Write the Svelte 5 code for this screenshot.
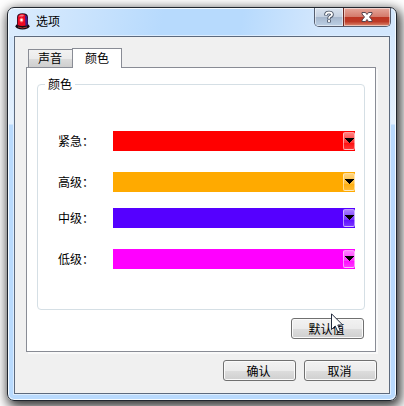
<script lang="ts">
	type Level = { id: string; label: string; color: string };

	const palette = ['#ff0000', '#ffaa00', '#5500ff', '#ff00ff'];
	const defaults = ['#ff0000', '#ffaa00', '#5500ff', '#ff00ff'];

	let tab = $state('color');
	let levels = $state<Level[]>([
		{ id: 'urgent', label: '紧急：', color: '#ff0000' },
		{ id: 'high', label: '高级：', color: '#ffaa00' },
		{ id: 'medium', label: '中级：', color: '#5500ff' },
		{ id: 'low', label: '低级：', color: '#ff00ff' },
	]);

	function reset() {
		levels.forEach((level, i) => (level.color = defaults[i]));
	}
</script>

<div class="window">
	<header>
		<svg class="app-icon" width="16" height="17" viewBox="0 0 16 17">
			<ellipse cx="7.5" cy="13.3" rx="7" ry="3.2" fill="#150a12" />
			<path d="M2 13V4.500Q2 .3 7.500 .3T13 4.500V13Z" fill="#281025" />
			<path d="M2.800 12V5Q3 1 7 1T12 5V12Q7 14 2.800 12Z" fill="#ee0822" />
			<path d="M10 2Q12.500 3 12.500 6V12L10.500 12.800Z" fill="#41188f" />
			<path d="M4 3Q6 1 9 2L8 3.500H4Z" fill="#f27a83" />
			<ellipse cx="6.500" cy="7" rx="2" ry="2.500" fill="#ff6262" />
			<circle cx="6.500" cy="7" r="1.200" fill="#fff" />
			<path d="M3 14Q7.500 16 12 14" fill="none" stroke="#a13a38" />
		</svg>
		<h1>选项</h1>
		<div class="caption">
			<button type="button" class="help" aria-label="帮助">
				<svg width="12" height="14" viewBox="0 0 12 14" fill="none">
					<path d="M3 5.500V4.500Q3 2.500 6 2.500T9 4.500Q9 6 7 6.500Q6 7 6 9M6 9.500V12.500" stroke="#4b5566" stroke-width="3.600" />
					<path d="M3 5V4.500Q3 2.500 6 2.500T9 4.500Q9 6 7 6.500Q6 7 6 8.800M6 10V12" stroke="#fff" stroke-width="1.800" />
				</svg>
			</button>
			<button type="button" class="close" aria-label="关闭">
				<svg width="14" height="12" viewBox="0 0 14 12">
					<path d="M2 1.500H5.500L7 3.500 8.500 1.500H12V3L9.500 6 12 9V10.500H8.500L7 8.500 5.500 10.500H2V9L4.500 6 2 3Z" fill="#fff" stroke="#57444e" />
				</svg>
			</button>
		</div>
	</header>

	<main>
		<div class="tabs" role="tablist">
			<button type="button" role="tab" aria-selected={tab === 'sound'} onclick={() => (tab = 'sound')}>声音</button>
			<button type="button" role="tab" aria-selected={tab === 'color'} onclick={() => (tab = 'color')}>颜色</button>
		</div>

		<div class="pane" role="tabpanel">
			{#if tab === 'color'}
				<fieldset>
					<legend>颜色</legend>
					{#each levels as level (level.id)}
						<div class="row">
							<label for={level.id}>{level.label}</label>
							<div class="combo">
								<select id={level.id} bind:value={level.color} style:background-color={level.color}>
									{#each palette as color}
										<option value={color} style:background-color={color}></option>
									{/each}
								</select>
								<span class="drop">
									<svg width="9" height="5" viewBox="0 0 9 5" shape-rendering="crispEdges">
										<path d="M0 0H9V1H8V2H7V3H6V4H5V5H4V4H3V3H2V2H1V1H0Z" />
									</svg>
								</span>
							</div>
						</div>
					{/each}
				</fieldset>
				<div class="defaults">
					<button type="button" class="push" onclick={reset}>默认值</button>
					<svg class="pointer" width="13" height="20" viewBox="0 0 13 20">
						<path d="M.5 .8V16.500L4.200 13 6.800 18.800 9.300 17.700 6.800 12H11.700Z" fill="#fff" stroke="#222a3c" />
					</svg>
				</div>
			{/if}
		</div>

		<footer>
			<button type="button" class="push">确认</button>
			<button type="button" class="push">取消</button>
		</footer>
	</main>
</div>

<style>
	:global(body) {
		background: #fff;
		overflow: hidden;
	}
	.window {
		box-sizing: border-box;
		display: flex;
		flex-direction: column;
		min-height: calc(100vh - 12px);
		margin: 7px 7px 5px;
		padding: 0 6px 6px;
		border: 1px solid #20262e;
		border-radius: 7px;
		background:
			linear-gradient(100deg, #dcecfd 0, #b7dafd 40%, #b7dafd 60%, #d3e7fd 80%) top / 100% 29px no-repeat,
			linear-gradient(#d0e5fc 0, #e4f1fe 116px, #b9dafd 117px);
		box-shadow: inset 0 0 0 1px #f4faff, 2px 4px 12px 2px rgba(0, 0, 0, 0.8);
		font: 12px/16px "Noto Sans CJK SC", sans-serif;
		color: #000;
	}
	header {
		display: flex;
		height: 28px;
		margin: 0 -1px;
	}
	.app-icon {
		margin: 5px 5px 0 2px;
	}
	h1 {
		flex: 1;
		margin: 5px 0 0;
		font: inherit;
	}
	.caption {
		display: flex;
		height: 19px;
		box-sizing: border-box;
		border: 1px solid #555e70;
		border-top: 0;
		border-radius: 0 0 5px 5px;
		overflow: hidden;
	}
	.caption button {
		display: flex;
		align-items: center;
		justify-content: center;
		padding: 0;
		border: 0;
		box-shadow: inset 0 0 0 1px rgba(255, 255, 255, 0.5);
	}
	.caption .help {
		width: 28px;
		background: linear-gradient(#d9e3ef 0, #c4d0e0 50%, #a5b6cc 51%, #bdd0e5);
	}
	.caption .close {
		width: 47px;
		border-left: 1px solid #6b2722;
		background: linear-gradient(#e6a79b 0, #d47b6c 48%, #bd3522 50%, #bd3a27 75%, #dd8b72);
	}
	main {
		flex: 1;
		display: flex;
		flex-direction: column;
		padding: 11px 11px 12px;
		border: 1px solid #5d6a7d;
		background: #f0f0f0;
		box-shadow: 0 0 0 1px #dcedff;
	}
	.tabs {
		display: flex;
		align-items: flex-end;
		height: 20px;
		padding-left: 2px;
		margin-bottom: -1px;
		z-index: 1;
	}
	.tabs button {
		box-sizing: border-box;
		width: 44px;
		height: 19px;
		padding: 0 1px 1px 0;
		border: 1px solid #898c95;
		border-right: 0;
		background: linear-gradient(#f2f2f2 0, #ebebeb 50%, #dcdcdc 51%, #cfcfcf);
		font: inherit;
		line-height: 16px;
	}
	.tabs button[aria-selected='true'] {
		width: 50px;
		height: 20px;
		padding: 0 0 1px;
		border-right: 1px solid #898c95;
		border-bottom: 0;
		background: #fff;
	}
	.pane {
		flex: 1;
		margin-right: 2px;
		padding: 8px 10px 11px;
		border: 1px solid #898c95;
		background: #fff;
		box-shadow: 2px 2px 0 #f9f9f9;
	}
	fieldset {
		min-width: 0;
		box-sizing: border-box;
		margin: 0;
		padding: 39px 9px 24px 20px;
		border: 1px solid #d5dfe5;
		border-radius: 4px;
	}
	legend {
		margin-left: -13px;
		padding: 0 3px;
	}
	.row {
		display: flex;
		align-items: center;
		margin-bottom: 21px;
	}
	.row:nth-of-type(even) {
		margin-bottom: 16px;
	}
	.row label {
		width: 55px;
	}
	.combo {
		position: relative;
		flex: 1;
		height: 20px;
	}
	select {
		display: block;
		appearance: none;
		width: 100%;
		height: 20px;
		border: 0;
		border-radius: 0;
	}
	.drop {
		position: absolute;
		top: 1px;
		right: 0;
		display: flex;
		justify-content: center;
		box-sizing: border-box;
		width: 12px;
		height: 18px;
		padding-top: 5px;
		border: 1px solid rgba(255, 255, 255, 0.5);
		border-radius: 2px;
		background: linear-gradient(rgba(255, 255, 255, 0.5), rgba(255, 255, 255, 0.2) 60%, rgba(255, 255, 255, 0.05) 61%, rgba(255, 255, 255, 0.2));
		pointer-events: none;
	}
	.drop svg {
		flex: none;
	}
	.defaults {
		position: relative;
		display: flex;
		justify-content: flex-end;
		margin-top: 8px;
		padding-right: 1px;
	}
	.pointer {
		position: absolute;
		top: -5px;
		right: 21px;
	}
	.push {
		width: 73px;
		height: 21px;
		padding: 0 2px 0 0;
		border: 1px solid #707070;
		border-radius: 3px;
		background: linear-gradient(#f2f2f2 0, #ebebeb 50%, #dddddd 51%, #cfcfcf);
		box-shadow: inset 0 0 0 1px #fafafa;
		font: inherit;
		line-height: 16px;
	}
	footer {
		display: flex;
		justify-content: flex-end;
		gap: 8px;
		margin-top: 8px;
		padding-right: 1px;
	}
</style>
